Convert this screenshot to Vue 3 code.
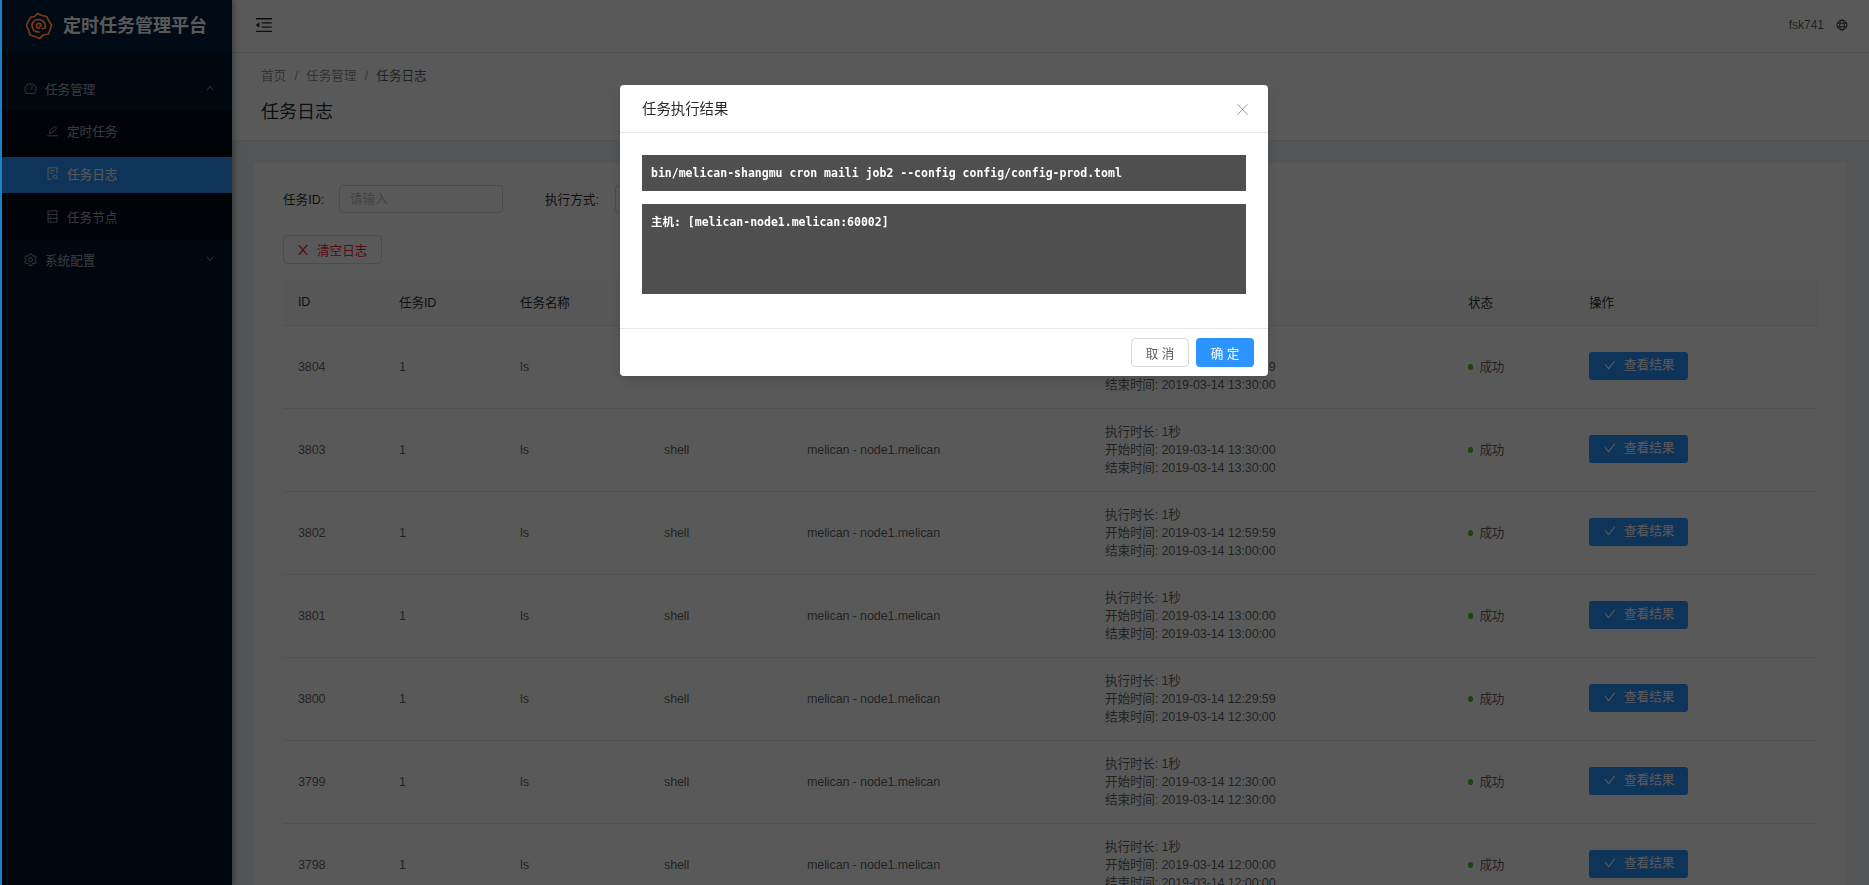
<script setup>
import { ref } from 'vue';

const menuOpen = ref(true);

const logs = [
  { id: 3804, start: '2019-03-14 13:29:59', end: '2019-03-14 13:30:00' },
  { id: 3803, start: '2019-03-14 13:30:00', end: '2019-03-14 13:30:00' },
  { id: 3802, start: '2019-03-14 12:59:59', end: '2019-03-14 13:00:00' },
  { id: 3801, start: '2019-03-14 13:00:00', end: '2019-03-14 13:00:00' },
  { id: 3800, start: '2019-03-14 12:29:59', end: '2019-03-14 12:30:00' },
  { id: 3799, start: '2019-03-14 12:30:00', end: '2019-03-14 12:30:00' },
  { id: 3798, start: '2019-03-14 12:00:00', end: '2019-03-14 12:00:00' },
];
</script>

<template>
  <div class="layout">
    <aside class="sider">
      <div class="logo">
        <svg class="logo-icon" viewBox="0 0 28 28" fill="none" stroke="#7d3a14" stroke-width="1.7" stroke-linejoin="round" stroke-linecap="round">
          <path d="M12.5 1.5 L17 3.5 L21.5 4.5 L24 9 L26.5 13 L25 18 L23.5 22 L18.5 23 L14.5 26.5 L10 24.5 L5 23 L3.5 18 L1.5 13.5 L3.5 9 L6 5 L9.5 4.5 Z" />
          <path d="M14 20 C9.5 20 7 17 7 13.5 C7 10 10 7.5 13.5 7.5 C17.5 7.5 20.5 10.5 20.5 14 C20.5 16.5 18.5 17 17 16.5" />
          <path d="M14.5 16.5 C12 16.5 11 14.5 11.5 13 C12 11.5 14 11 15.5 12 C16.5 13 16 14.5 14.5 14.5" />
        </svg>
        <span class="logo-title">定时任务管理平台</span>
      </div>
      <nav class="menu">
        <div class="menu-title" @click="menuOpen = !menuOpen">
          <svg class="menu-icon" viewBox="0 0 16 16" fill="none" stroke="currentColor" stroke-width="1.1">
            <path d="M3 14 A7 7 0 1 1 13 14 Z" stroke-linejoin="round" />
            <path d="M8 9.5 L10.6 5.2" />
            <path d="M3.4 8.5 H4.6 M11.4 8.5 H12.6 M8 3.4 V4.6 M4.6 5 L5.4 5.8" />
          </svg>
          <span>任务管理</span>
          <svg class="menu-arrow" viewBox="64 64 896 896" fill="currentColor">
            <path d="M890.5 755.3L537.9 269.2c-12.8-17.6-39-17.6-51.7 0L133.5 755.3A8 8 0 0 0 140 768h75c5.1 0 9.9-2.5 12.9-6.6L512 369.8l284.1 391.6c3 4.1 7.8 6.6 12.9 6.6h75c6.5 0 10.3-7.4 6.5-12.7z" />
          </svg>
        </div>
        <div v-if="menuOpen" class="submenu">
          <div class="submenu-item">
            <svg class="menu-icon" viewBox="0 0 16 16" fill="none" stroke="currentColor" stroke-width="1.1">
              <path d="M1.5 14.5 H14.5" />
              <path d="M4 11.5 L4.6 8.6 L10.6 2.6 L13 5 L7 11 Z" stroke-linejoin="round" />
            </svg>
            <span>定时任务</span>
          </div>
          <div class="submenu-item active">
            <svg class="menu-icon" viewBox="0 0 16 16" fill="none" stroke="currentColor" stroke-width="1.1">
              <path d="M7 15 H2.5 V1 H13.5 V8" />
              <path d="M5 4.5 H11 M5 7.5 H9" />
              <circle cx="11.3" cy="12" r="2.2" />
              <path d="M13 13.7 L14.8 15.4" />
            </svg>
            <span>任务日志</span>
          </div>
          <div class="submenu-item">
            <svg class="menu-icon" viewBox="0 0 16 16" fill="none" stroke="currentColor" stroke-width="1.1">
              <rect x="2.5" y="1" width="11" height="14" />
              <path d="M2.5 5.6 H13.5 M2.5 10.3 H13.5" />
              <path d="M5 3.3 H6.2 M5 8 H6.2 M5 12.7 H6.2" />
            </svg>
            <span>任务节点</span>
          </div>
        </div>
        <div class="menu-title">
          <svg class="menu-icon" viewBox="0 0 16 16" fill="none" stroke="currentColor" stroke-width="1.1" stroke-linejoin="round">
            <path d="M6.6 1 H9.4 L10 3.1 L11.8 4.1 L13.9 3.5 L15.3 5.9 L13.7 7.4 V9.4 L15.3 10.6 L13.9 13 L11.8 12.4 L10 13.4 L9.4 15.5 H6.6 L6 13.4 L4.2 12.4 L2.1 13 L0.7 10.6 L2.3 9.1 V7.4 L0.7 5.9 L2.1 3.5 L4.2 4.1 L6 3.1 Z" />
            <circle cx="8" cy="8.2" r="2.5" />
          </svg>
          <span>系统配置</span>
          <svg class="menu-arrow" viewBox="64 64 896 896" fill="currentColor">
            <path d="M884 256h-75c-5.1 0-9.9 2.5-12.9 6.6L512 654.2 227.9 262.6c-3-4.1-7.8-6.6-12.9-6.6h-75c-6.5 0-10.3 7.4-6.5 12.7l352.6 486.1c12.8 17.6 39 17.6 51.7 0l352.6-486.1c3.9-5.3.1-12.7-6.4-12.7z" />
          </svg>
        </div>
      </nav>
    </aside>

    <div class="main">
      <header class="topbar">
        <svg class="trigger" viewBox="64 64 896 896" fill="currentColor">
          <path d="M408 442h480c4.4 0 8-3.6 8-8v-56c0-4.4-3.6-8-8-8H408c-4.4 0-8 3.6-8 8v56c0 4.4 3.6 8 8 8zm-8 204c0 4.4 3.6 8 8 8h480c4.4 0 8-3.6 8-8v-56c0-4.4-3.6-8-8-8H408c-4.4 0-8 3.6-8 8v56zm504-486H120c-4.4 0-8 3.6-8 8v56c0 4.4 3.6 8 8 8h784c4.4 0 8-3.6 8-8v-56c0-4.4-3.6-8-8-8zm0 632H120c-4.4 0-8 3.6-8 8v56c0 4.4 3.6 8 8 8h784c4.4 0 8-3.6 8-8v-56c0-4.4-3.6-8-8-8zM115.4 518.9L271.7 642c5.8 4.6 14.4.5 14.4-6.9V388.9c0-7.4-8.5-11.5-14.4-6.9L115.4 505.1a8.74 8.74 0 0 0 0 13.8z" />
        </svg>
        <div class="topbar-right">
          <span class="user">fsk741</span>
          <svg class="globe" viewBox="0 0 16 16" fill="none" stroke="currentColor" stroke-width="1.2">
            <circle cx="8" cy="8" r="6.6" />
            <ellipse cx="8" cy="8" rx="3" ry="6.6" />
            <path d="M1.8 5.6 H14.2 M1.8 10.4 H14.2" />
          </svg>
        </div>
      </header>

      <div class="page-head">
        <div class="breadcrumb">
          <span>首页</span><i>/</i><span>任务管理</span><i>/</i><span class="current">任务日志</span>
        </div>
        <h1>任务日志</h1>
      </div>

      <div class="content">
        <div class="card">
          <div class="filters">
            <label>任务ID:</label>
            <div class="input">请输入</div>
            <label class="second">执行方式:</label>
            <div class="select"></div>
          </div>
          <button class="btn-clear">
            <svg class="clear-icon" viewBox="64 64 896 896" fill="currentColor">
              <path d="M563.8 512l262.5-312.9c4.4-5.2.7-13.1-6.1-13.1h-79.8c-4.7 0-9.2 2.1-12.3 5.7L511.6 449.8 295.1 191.7c-3-3.6-7.5-5.7-12.3-5.7H203c-6.8 0-10.5 7.9-6.1 13.1L459.4 512 196.9 824.9A7.95 7.95 0 0 0 203 838h79.8c4.7 0 9.2-2.1 12.3-5.7l216.5-258.1 216.5 258.1c3 3.6 7.5 5.7 12.3 5.7h79.8c6.8 0 10.5-7.9 6.1-13.1L563.8 512z" />
            </svg>
            <span>清空日志</span>
          </button>

          <table class="log-table">
            <colgroup>
              <col style="width: 101px" />
              <col style="width: 121px" />
              <col style="width: 144px" />
              <col style="width: 143px" />
              <col style="width: 298px" />
              <col style="width: 363px" />
              <col style="width: 121px" />
              <col />
            </colgroup>
            <thead>
              <tr>
                <th>ID</th>
                <th>任务ID</th>
                <th>任务名称</th>
                <th>执行方式</th>
                <th>任务节点</th>
                <th>执行时长</th>
                <th>状态</th>
                <th>操作</th>
              </tr>
            </thead>
            <tbody>
              <tr v-for="log in logs" :key="log.id">
                <td>{{ log.id }}</td>
                <td>1</td>
                <td>ls</td>
                <td>shell</td>
                <td>melican - node1.melican</td>
                <td>
                  <div>执行时长: 1秒</div>
                  <div>开始时间: {{ log.start }}</div>
                  <div>结束时间: {{ log.end }}</div>
                </td>
                <td><span class="dot"></span>成功</td>
                <td>
                  <button class="btn-view">
                    <svg class="btn-icon" viewBox="64 64 896 896" fill="currentColor">
                      <path d="M912 190h-69.9c-9.8 0-19.1 4.5-25.1 12.2L404.7 724.5 207 474a32 32 0 0 0-25.1-12.2H112c-6.7 0-10.4 7.7-6.3 12.9l273.9 347c12.8 16.2 37.4 16.2 50.3 0l488.4-618.9c4.1-5.1.4-12.8-6.3-12.8z" />
                    </svg>
                    <span>查看结果</span>
                  </button>
                </td>
              </tr>
            </tbody>
          </table>
        </div>
      </div>
    </div>

    <div class="mask"></div>
    <div class="edge"></div>

    <div class="modal">
      <div class="modal-head">
        <span>任务执行结果</span>
        <svg class="modal-close" viewBox="0 0 11 11" fill="none" stroke="currentColor" stroke-width="0.9">
          <path d="M0.5 0.3 L10.5 10.7 M10.5 0.3 L0.5 10.7" />
        </svg>
      </div>
      <div class="modal-body">
        <pre class="cmd">bin/melican-shangmu cron maili job2 --config config/config-prod.toml</pre>
        <pre class="output">主机: [melican-node1.melican:60002]</pre>
      </div>
      <div class="modal-foot">
        <button class="btn-cancel">取 消</button>
        <button class="btn-ok">确 定</button>
      </div>
    </div>
  </div>
</template>

<style>
html,
body {
  margin: 0;
  overflow: hidden;
}
</style>

<style scoped>
.layout {
  display: flex;
  height: 885px;
  overflow: hidden;
  font-family: "Liberation Sans", "Noto Sans CJK SC", sans-serif;
  font-size: 12.6px;
  color: rgba(0, 0, 0, 0.65);
  background: #f0f2f5;
}
.sider {
  flex: 0 0 232px;
  background: #001529;
  box-shadow: 2px 0 6px rgba(0, 21, 41, 0.35);
  position: relative;
  color: rgba(255, 255, 255, 0.65);
}
.logo {
  height: 53px;
  box-sizing: border-box;
  display: flex;
  align-items: center;
  padding: 0 0 2px 25px;
  gap: 10px;
  background: #002140;
}
/* the logo keeps its colour above the mask */
.logo-icon {
  width: 28px;
  height: 28px;
  position: relative;
  z-index: 11;
}
.logo-title {
  color: #fff;
  font-size: 18px;
  font-weight: 700;
  line-height: 1;
}
.menu {
  padding-top: 18px;
}
.menu-title {
  height: 39px;
  box-sizing: border-box;
  display: flex;
  align-items: center;
  padding: 0 18px 5px 24px;
  gap: 8px;
  cursor: pointer;
}
.menu-arrow {
  width: 8px;
  height: 8px;
  margin-left: auto;
}
.menu-icon {
  width: 13px;
  height: 13px;
  flex: none;
}
.submenu {
  background: #000c17;
  padding: 4px 0;
  display: flex;
  flex-direction: column;
  gap: 7px;
  margin-bottom: 2px;
}
.submenu-item {
  height: 36px;
  box-sizing: border-box;
  display: flex;
  align-items: center;
  padding: 0 0 4px 46px;
  gap: 8px;
}
.submenu-item.active {
  background: #2d94ff;
  color: #fff;
}
.main {
  flex: 1;
  min-width: 0;
}
.topbar {
  height: 53px;
  box-sizing: border-box;
  background: #fff;
  border-bottom: 1px solid #e8e8e8;
  display: flex;
  align-items: center;
  justify-content: space-between;
  padding: 0 21px 3px 23px;
}
.trigger {
  width: 18px;
  height: 18px;
  color: rgba(0, 0, 0, 0.85);
}
.topbar-right {
  display: flex;
  align-items: center;
  gap: 12px;
}
.user {
  font-size: 12px;
}
.globe {
  width: 12px;
  height: 12px;
  color: rgba(0, 0, 0, 0.85);
}
.page-head {
  height: 88px;
  box-sizing: border-box;
  background: #fff;
  border-bottom: 1px solid #e8e8e8;
  padding: 14px 0 0 29px;
}
.breadcrumb {
  line-height: 18px;
  color: rgba(0, 0, 0, 0.45);
}
.breadcrumb i {
  font-style: normal;
  margin: 0 8.2px;
}
.breadcrumb .current {
  color: rgba(0, 0, 0, 0.65);
}
.page-head h1 {
  margin: 13px 0 0;
  font-size: 18px;
  font-weight: 400;
  line-height: 28px;
  color: rgba(0, 0, 0, 0.85);
}
.content {
  padding: 22px;
}
.card {
  background: #fff;
  padding: 22px 29px;
}
.filters {
  display: flex;
  align-items: center;
  height: 28px;
}
.filters label {
  width: 56px;
  color: rgba(0, 0, 0, 0.85);
  padding-bottom: 2px;
}
.filters label.second {
  width: 70px;
  margin-left: 42px;
}
.input {
  box-sizing: border-box;
  width: 164px;
  height: 28px;
  line-height: 26px;
  padding: 0 10px;
  border: 1px solid #d9d9d9;
  border-radius: 4px;
  color: #bfbfbf;
}
.select {
  box-sizing: border-box;
  width: 164px;
  height: 28px;
  border: 1px solid #d9d9d9;
  border-radius: 4px;
}
.btn-clear {
  display: flex;
  align-items: center;
  gap: 7px;
  box-sizing: border-box;
  margin: 22px 0 15px;
  height: 29px;
  width: 99px;
  padding: 0 12px;
  white-space: nowrap;
  background: #fff;
  border: 1px solid #d9d9d9;
  border-radius: 4px;
  color: #f5222d;
  font: inherit;
}
.clear-icon {
  width: 14px;
  height: 14px;
  flex: none;
}
.btn-icon {
  width: 12px;
  height: 12px;
  flex: none;
}
.log-table {
  width: 100%;
  border-collapse: collapse;
  table-layout: fixed;
  letter-spacing: -0.15px;
}
.log-table th {
  height: 46px;
  box-sizing: border-box;
  padding: 0 15px;
  text-align: left;
  font-weight: 400;
  color: rgba(0, 0, 0, 0.85);
  background: #fafafa;
  border-bottom: 1px solid #e8e8e8;
}
.log-table td {
  height: 83px;
  box-sizing: border-box;
  padding: 0 15px;
  line-height: 18px;
  border-bottom: 1px solid #e8e8e8;
}
.dot {
  display: inline-block;
  width: 5.4px;
  height: 5.4px;
  border-radius: 50%;
  background: #52c41a;
  margin-right: 6px;
  vertical-align: 1px;
}
.btn-view {
  display: flex;
  align-items: center;
  gap: 8px;
  box-sizing: border-box;
  height: 28px;
  width: 99px;
  margin-bottom: 2px;
  padding: 0 15px 1px;
  white-space: nowrap;
  background: #2d94ff;
  border: 0;
  border-radius: 3px;
  color: #fff;
  font: inherit;
  letter-spacing: 0;
}
.mask {
  position: fixed;
  inset: 0;
  z-index: 10;
  background: rgba(0, 0, 0, 0.65);
}
.edge {
  position: fixed;
  left: 0;
  top: 0;
  bottom: 0;
  width: 1.5px;
  z-index: 11;
  background: #1f7fc9;
}
.modal {
  position: fixed;
  left: 620px;
  top: 85px;
  width: 648px;
  z-index: 12;
  background: #fff;
  border-radius: 4px;
  box-shadow: 0 4px 12px rgba(0, 0, 0, 0.15);
}
.modal-head {
  height: 48px;
  box-sizing: border-box;
  display: flex;
  align-items: center;
  justify-content: space-between;
  padding: 0 20px 2px 22px;
  border-bottom: 1px solid #e8e8e8;
  font-size: 14.4px;
  color: rgba(0, 0, 0, 0.85);
}
.modal-close {
  width: 11px;
  height: 11px;
  margin-top: 4px;
  color: rgba(0, 0, 0, 0.45);
}
.modal-body {
  height: 195px;
  box-sizing: border-box;
  padding: 22px 22px 0;
}
.modal-body pre {
  margin: 0;
  background: #4f4f4f;
  color: #fff;
  font-family: "DejaVu Sans Mono", "Noto Sans CJK SC", monospace;
  font-size: 11.5px;
  font-weight: 700;
  line-height: 18px;
  padding: 0 9px;
}
.cmd {
  height: 36px;
  line-height: 36px !important;
}
.output {
  box-sizing: border-box;
  margin-top: 13px !important;
  height: 90px;
  padding-top: 9px !important;
}
.modal-foot {
  height: 48px;
  box-sizing: border-box;
  display: flex;
  justify-content: flex-end;
  align-items: center;
  gap: 7px;
  padding: 0 14px;
  border-top: 1px solid #e8e8e8;
}
.btn-cancel,
.btn-ok {
  height: 29px;
  width: 58px;
  box-sizing: border-box;
  border-radius: 4px;
  font: inherit;
}
.btn-cancel {
  background: #fff;
  border: 1px solid #d9d9d9;
  color: rgba(0, 0, 0, 0.65);
}
.btn-ok {
  background: #2d94ff;
  border: 0;
  color: #fff;
}
</style>
